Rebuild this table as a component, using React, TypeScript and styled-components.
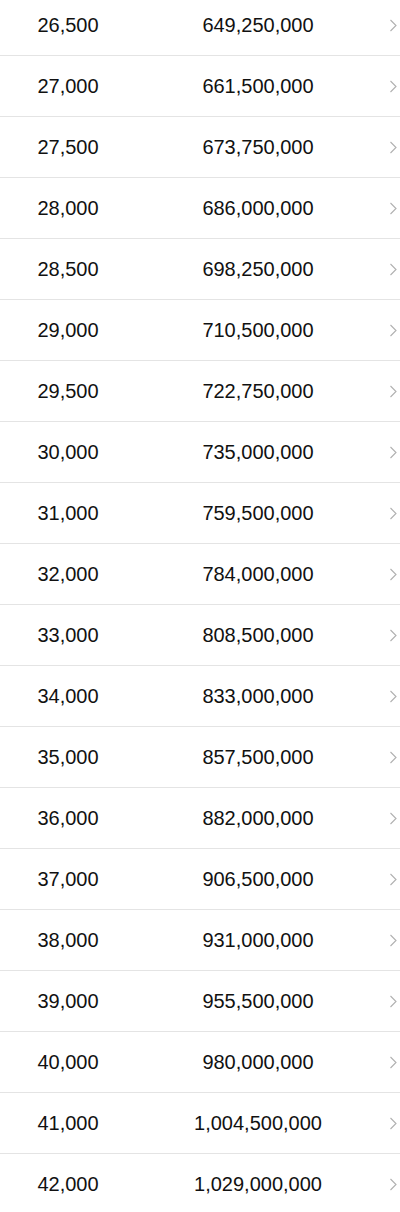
import React from 'react';
import styled, { createGlobalStyle } from 'styled-components';

const GlobalStyle = createGlobalStyle`
    html, body {
        margin: 0;
        padding: 0;
        background: #ffffff;
    }
    body {
        font-family: "Liberation Sans", Arial, Helvetica, sans-serif;
        overflow: hidden;
    }
`;

const List = styled.div`
    width: 400px;
    margin-top: -5px;
    background: #ffffff;
`;

const Row = styled.div`
    display: flex;
    align-items: center;
    height: 60px;
    border-bottom: 1px solid #e4e4e4;
    font-size: 20px;
    color: #111111;
`;

const Amount = styled.div`
    width: 136px;
    text-align: center;
`;

const Total = styled.div`
    flex: 1;
    text-align: center;
`;

const Arrow = styled.div`
    width: 20px;
    display: flex;
    align-items: center;
    padding-left: 9px;
    box-sizing: border-box;
`;

const Chevron = () => (
    <svg width="8" height="13" viewBox="0 0 8 13" fill="none">
        <path d="M1.5 1l5.5 5.5-5.5 5.5" stroke="#b0b0b0" strokeWidth="1.1" />
    </svg>
);

const rows: [number, number][] = [
    26500, 27000, 27500, 28000, 28500, 29000, 29500, 30000,
    31000, 32000, 33000, 34000, 35000, 36000, 37000, 38000,
    39000, 40000, 41000, 42000,
].map((n) => [n, n * 24500]);

const App = () => {
    return (
        <>
            <GlobalStyle />
            <List>
                {rows.map(([amount, total]) => (
                    <Row key={amount}>
                        <Amount>{amount.toLocaleString('en-US')}</Amount>
                        <Total>{total.toLocaleString('en-US')}</Total>
                        <Arrow>
                            <Chevron />
                        </Arrow>
                    </Row>
                ))}
            </List>
        </>
    );
};

export default App;
